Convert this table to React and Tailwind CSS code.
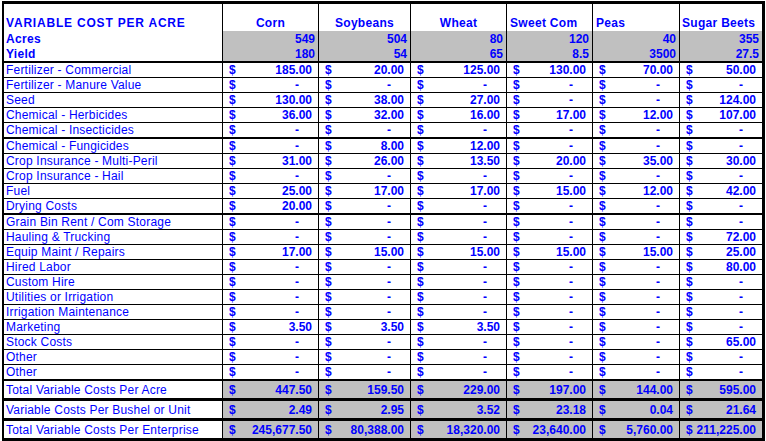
import React from "react";

const cols = ["Corn", "Soybeans", "Wheat", "Sweet Com", "Peas", "Sugar Beets"];
const colW = ["w-[96px]", "w-[92px]", "w-[96px]", "w-[86px]", "w-[87px]", "w-[83px]"];
const headAlign = [
  "justify-center",
  "justify-center",
  "justify-center",
  "justify-start pl-[3px]",
  "justify-start pl-[3px]",
  "justify-start pl-[2px]",
];

const acres = ["549", "504", "80", "120", "40", "355"];
const yields = ["180", "54", "65", "8.5", "3500", "27.5"];

const D = null;
const sections = [
  [
    ["Fertilizer - Commercial", ["185.00", "20.00", "125.00", "130.00", "70.00", "50.00"]],
    ["Fertilizer - Manure Value", [D, D, D, D, D, D]],
    ["Seed", ["130.00", "38.00", "27.00", D, D, "124.00"]],
    ["Chemical - Herbicides", ["36.00", "32.00", "16.00", "17.00", "12.00", "107.00"]],
    ["Chemical - Insecticides", [D, D, D, D, D, D]],
  ],
  [
    ["Chemical - Fungicides", [D, "8.00", "12.00", D, D, D]],
    ["Crop Insurance - Multi-Peril", ["31.00", "26.00", "13.50", "20.00", "35.00", "30.00"]],
    ["Crop Insurance - Hail", [D, D, D, D, D, D]],
    ["Fuel", ["25.00", "17.00", "17.00", "15.00", "12.00", "42.00"]],
    ["Drying Costs", ["20.00", D, D, D, D, D]],
  ],
  [
    ["Grain Bin Rent / Com Storage", [D, D, D, D, D, D]],
    ["Hauling & Trucking", [D, D, D, D, D, "72.00"]],
    ["Equip Maint / Repairs", ["17.00", "15.00", "15.00", "15.00", "15.00", "25.00"]],
    ["Hired Labor", [D, D, D, D, D, "80.00"]],
    ["Custom Hire", [D, D, D, D, D, D]],
    ["Utilities or Irrigation", [D, D, D, D, D, D]],
    ["Irrigation Maintenance", [D, D, D, D, D, D]],
    ["Marketing", ["3.50", "3.50", "3.50", D, D, D]],
    ["Stock Costs", [D, D, D, D, D, "65.00"]],
    ["Other", [D, D, D, D, D, D]],
    ["Other", [D, D, D, D, D, D]],
  ],
];

const totals = [
  ["Total Variable Costs Per Acre", ["447.50", "159.50", "229.00", "197.00", "144.00", "595.00"]],
  ["Variable Costs Per Bushel or Unit", ["2.49", "2.95", "3.52", "23.18", "0.04", "21.64"]],
  ["Total Variable Costs Per Enterprise", ["245,677.50", "80,388.00", "18,320.00", "23,640.00", "5,760.00", "211,225.00"]],
];

const MoneyCell = ({ i, v, gray }) => (
  <div
    className={`${colW[i]} flex items-center justify-between border-l border-black pl-[6px] pr-[6px] font-bold ${
      gray ? "bg-[#c0c0c0]" : ""
    }`}
  >
    <span>$</span>
    {v ? <span>{v}</span> : <span className="pr-[13px]">-</span>}
  </div>
);

const DataRow = ({ label, vals, thick }) => (
  <div className={`flex ${thick ? "h-[16px] border-b-2" : "h-[15px] border-b"} border-black`}>
    <div className="w-[218px] flex items-center pl-[2px] tracking-[0.2px]">{label}</div>
    {vals.map((v, i) => (
      <MoneyCell key={i} i={i} v={v} />
    ))}
  </div>
);

export default function App() {
  return (
    <div className="bg-white w-[766px] h-[441px] pt-[1px] pl-[2px]">
      <div
        className="w-[763px] border-l-2 border-t-[3px] border-r-[3px] border-b-[3px] border-black text-[12px] leading-none text-[#0000ff]"
        style={{ fontFamily: '"Liberation Sans", Arial, sans-serif' }}
      >
        {/* header */}
        <div className="flex h-[27px]">
          <div className="w-[218px] flex items-end pl-[2px] pb-[2px] font-bold tracking-[0.8px]">
            VARIABLE COST PER ACRE
          </div>
          {cols.map((c, i) => (
            <div
              key={c}
              className={`${colW[i]} flex items-end pb-[2px] border-l border-black font-bold tracking-[0.3px] ${headAlign[i]}`}
            >
              {c}
            </div>
          ))}
        </div>

        {/* acres / yield */}
        <div className="flex h-[32px] border-b-2 border-black font-bold">
          <div className="w-[218px] flex flex-col pl-[2px] tracking-[0.3px]">
            <div className="h-[15px] flex items-center">Acres</div>
            <div className="h-[15px] flex items-center">Yield</div>
          </div>
          {cols.map((c, i) => (
            <div key={c} className={`${colW[i]} flex flex-col border-l border-black bg-[#c0c0c0] pr-[3px] items-end`}>
              <div className="h-[15px] flex items-center">{acres[i]}</div>
              <div className="h-[15px] flex items-center">{yields[i]}</div>
            </div>
          ))}
        </div>

        {sections.map((rows, s) =>
          rows.map(([label, vals], r) => (
            <DataRow key={`${s}-${r}`} label={label} vals={vals} thick={r === rows.length - 1} />
          ))
        )}

        {totals.map(([label, vals], r) => (
          <div
            key={label}
            className={`flex ${r < 2 ? "h-[20px] border-b-[3px]" : "h-[17px]"} border-black`}
          >
            <div className="w-[218px] flex items-center pl-[2px] tracking-[0.2px]">{label}</div>
            {vals.map((v, i) => (
              <MoneyCell key={i} i={i} v={v} gray />
            ))}
          </div>
        ))}
      </div>
    </div>
  );
}
